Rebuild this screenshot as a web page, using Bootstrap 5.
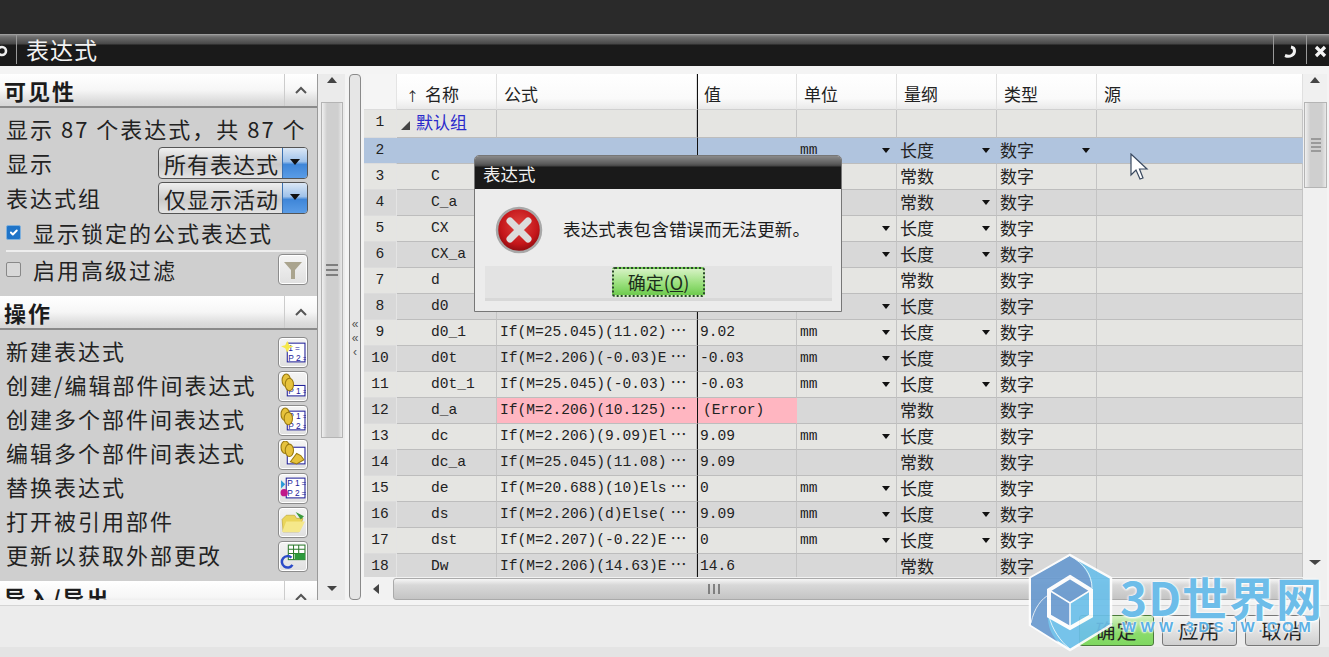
<!DOCTYPE html>
<html lang="zh-CN">
<head>
    <meta charset="UTF-8">
    <meta name="viewport" content="width=device-width, initial-scale=1.0">
    <title>表达式</title>
    <link href="https://cdn.jsdelivr.net/npm/bootstrap@5.3.0/dist/css/bootstrap.min.css" rel="stylesheet">
    <style>
        html, body { height: 657px; overflow: hidden; }
        body {
            background: #f0f0f0;
            color: #1c1c1c;
            font-family: "Liberation Mono", "Noto Sans CJK SC", monospace;
            position: relative;
        }
        .cjk { font-family: "Noto Sans CJK SC", "Liberation Sans", sans-serif; font-weight: 400; }

        /* title area */
        .top-strip { height: 34px; background: #2a2a2a; }
        .title-strip {
            height: 32px;
            color: #f2f2f2;
            background: linear-gradient(#b0b0b0 0, #8a8a8a 1px, #6e6e6e 3px, #474747 10px, #1a1a1a 11px, #1a1a1a 100%);
        }
        .title-strip .title-text { font-size: 23px; letter-spacing: 1px; line-height: 1; padding: 4px 0 0 9px; }
        .title-gear { width: 17px; border-right: 1px solid #999; height: 30px; overflow: hidden; }
        .title-btn { width: 33px; height: 30px; border-left: 1px solid #999; }
        .main-area { height: 539px; background: #f4f4f4; padding-top: 8px; }

        /* left column */
        .side-col { width: 317px; height: 526px; overflow: hidden; flex: none; }
        .side-head {
            height: 34px;
            background: linear-gradient(#fff 0, #f6f6f6 50%, #dcdcdc 85%, #d6d6d6 100%);
            border-bottom: 2px solid #8a8a8a;
            font-size: 22px;
            font-weight: 700;
            letter-spacing: 2px;
            padding-left: 4px;
        }
        .side-head .head-fold { width: 33px; height: 100%; border-left: 1px solid #ccc; }
        .side-body { background: #cfcfcf; font-size: 22px; letter-spacing: 2px; padding: 0 6px; color: #222; }
        .vis-body { height: 188px; padding-top: 4px; }
        .ops-body { height: 251px; padding-top: 5px; }
        .side-line { height: 35px; }
        .side-line.with-icon { height: 34px; }
        .side-label { margin-bottom: 3px; }
        .sel-box {
            width: 150px; height: 32px; margin-left: auto; margin-right: 3px;
            border: 1px solid #555; border-radius: 4px;
            background: linear-gradient(#efefef, #c9c9c9 55%, #e4e4e4);
            overflow: hidden; letter-spacing: 1px;
        }
        .sel-box span { flex: 1; padding-left: 5px; white-space: nowrap; overflow: hidden; font-size: 22px; line-height: 30px; }
        .sel-drop {
            width: 25px; height: 100%; flex: none;
            background: linear-gradient(#dbe7f5 0, #9fc2ea 45%, #3f86d8 55%, #5a9ce6 100%);
            border-left: 1px solid #3a70b0;
        }
        .form-check-input.side-check {
            width: 15px; height: 15px; margin: 0 12px 0 0; flex: none;
            border: 1px solid #888; border-radius: 2px; background-color: #d8d8d8;
        }
        .form-check-input.side-check:checked { background-color: #1f74c8; border-color: #7fb0dc; }
        .side-sep { height: 2px; background: #eee; margin: 0 5px 0 0; }
        .tool-btn {
            width: 30px; height: 31px; margin-left: auto; margin-right: 3px; padding: 1px;
            border: 1px solid #8c8c8c; border-radius: 4px;
            background: linear-gradient(#f4f4f4, #e0e0e0);
            box-shadow: inset 0 0 0 1px #fff;
            flex: none;
        }

        /* scrollbars */
        .vert-bar { width: 28px; flex: none; border-left: 1px solid #9a9a9a; height: 526px; position: relative; background: #ebebeb; }
        .vert-bar .bar-thumb { position: absolute; left: 3px; right: 2px; background: linear-gradient(90deg, #f0f0f0, #cfcfcf 25%, #cfcfcf 80%, #e8e8e8); border: 1px solid #b4b4b4; }
        .splitter { width: 12px; height: 526px; flex: none; margin: 0 3px 0 4px; border: 1px solid #8a8a8a; border-radius: 4px; background: #e6e6e6; color: #555; font-size: 12px; line-height: 14px; text-align: center; padding-top: 242px; font-family: "Liberation Sans", sans-serif; }
        .grid-pane { width: 939px; flex: none; }
        .grid-wrap { height: 503px; overflow: hidden; }
        .h-bar { height: 23px; background: #f2f2f2; position: relative; }
        .h-bar .h-thumb { position: absolute; left: 29px; right: 0; top: 1px; bottom: 0; background: linear-gradient(#f6f6f6 0, #d8d8d8 30%, #c4c4c4 100%); border: 1px solid #aaa; border-radius: 3px 0 0 3px; }

        /* expression sheet */
        .expr-sheet { table-layout: fixed; border-collapse: separate; border-spacing: 0; width: 939px; }
        .expr-sheet th {
            height: 36px; font-size: 17px; font-weight: 400; padding: 5px 0 0 7px;
            background: linear-gradient(#fff 0, #fafafa 70%, #e9e9e9 100%);
            border-right: 1px solid #e0e0e0; border-bottom: 1px solid #d0d0d0; color: #222;
        }
        .expr-sheet td {
            height: 26px; padding: 0 0 0 3px; font-size: 14.6px; line-height: 25px; vertical-align: top;
            font-family: "Liberation Mono", "Noto Sans CJK SC", monospace;
            white-space: nowrap; position: relative;
            border-right: 1px solid #c4c4c4; border-bottom: 1px solid #bdbdbd; color: #222;
        }
        .expr-sheet tr:nth-child(odd) td { background: #e5e5e2; }
        .expr-sheet tr:nth-child(even) td { background: #d8d8d8; }
        .expr-sheet tr.picked td { background: #b0c4de; border-right-color: #b0c4de; }
        .expr-sheet td.row-num, .expr-sheet th.row-num {
            background: #f5f5f5; text-align: center; padding: 0; border-right: 1px solid #e4e4e4; border-bottom: 1px solid #dcdcdc;
            font-size: 14.6px;
        }
        .expr-sheet .val-col { border-left: 1.5px solid #111; padding-left: 2px; }
        .expr-sheet th.val-col { padding-left: 6px; }
        .expr-sheet td.bad-cell { background: #ffb6c1 !important; border-right-color: #ffb6c1; }
        .expr-sheet td.val-col.bad-cell { padding-left: 5px; }
        .expr-sheet td.name-cell { padding-left: 34px; }
        .expr-sheet td.cjk { font-family: "Noto Sans CJK SC", sans-serif; font-size: 17px; line-height: 23px; }
        .expr-sheet td.group-cell { padding-left: 4px; line-height: 23px; }
        .group-name { color: #2a2acb; font-size: 17px; padding-left: 6px; }
        .dots { font-size: 16px; margin-left: 4px; line-height: 0; }
        .drop-mark { position: absolute; right: 6px; top: 10px; border: 4px solid transparent; border-top: 5px solid #111; border-bottom: 0; }

        /* footer */
        .foot-bar { height: 52px; border-top: 1px solid #d4d4d4; background: linear-gradient(#ececec 0, #ececec 80%, #e4e4e4 80%); padding: 9px 9px 0 0; }
        .btn.foot-btn {
            width: 75px; height: 31px; padding: 0; font-size: 20px; line-height: 29px; letter-spacing: 1px;
            border: 1px solid #777; border-radius: 3px; color: #222;
            background: linear-gradient(#f6f6f6, #cfcfcf);
        }
        .btn.foot-btn.go-btn { background: linear-gradient(#d4f0c0, #8adb6c 60%, #7fd860); border-color: #4a7a3a; }

        /* message box */
        .msg-box {
            position: absolute; left: 474px; top: 155px; width: 368px; height: 157px;
            background: #ececec; border: 1px solid #777; border-radius: 5px 5px 0 0; overflow: hidden;
        }
        .msg-head {
            height: 33px; color: #f0f0f0; font-size: 17.5px; line-height: 1; padding: 9px 0 0 8px;
            background: linear-gradient(#8a8a8a 0, #5a5a5a 8px, #444 10px, #1a1a1a 11px, #1a1a1a 100%);
            border: 0; border-radius: 0 !important;
        }
        .msg-main { height: 77px; padding: 0 0 0 20px; }
        .msg-text { font-size: 17.5px; margin-left: 20px; white-space: nowrap; letter-spacing: .15px; padding-top: 3px; }
        .msg-foot { margin: 0 9px 0 10px; height: 35px; background: #e3e3e3; border-bottom: 3px solid #d8d8d8; }
        .btn.msg-ok {
            width: 93px; height: 30px; padding: 0; font-size: 18px; line-height: 26px; color: #1c2c1c;
            border: 2px dotted #2c4a2c; border-radius: 3px;
            background: linear-gradient(#d6f2c4, #9be07e 55%, #6ecb4e);
        }

        .mouse-arrow { position: absolute; left: 1130px; top: 153px; }

        /* watermark */
        .mark-logo { position: absolute; left: 1028px; top: 553px; opacity: .92; }
        .mark-name {
            position: absolute; left: 1120px; top: 566px; font-size: 46px; font-weight: 700; line-height: 60px;
            color: #6dbde9; white-space: nowrap; letter-spacing: 1px;
            text-shadow: 0 0 2px #fff, 0 0 3px #fff, 1px 1px 2px #fff;
        }
        .mark-url {
            position: absolute; left: 1122px; top: 618px; font-size: 15px; line-height: 18px;
            font-family: "Liberation Sans", sans-serif; font-weight: 700; color: #5cb0e4; letter-spacing: 4.4px; white-space: nowrap;
            text-shadow: 0 0 2px #fff, 0 0 2px #fff, 0 0 3px #fff;
        }
    </style>
</head>
<body>
    <div class="top-strip"></div>

    <!-- Title bar -->
    <div class="title-strip d-flex cjk">
        <div class="title-gear d-flex align-items-center">
            <svg width="14" height="14" viewBox="0 0 14 14" style="margin-left:-5px;margin-top:3px;flex:none"><circle cx="7" cy="7" r="4" fill="none" stroke="#eee" stroke-width="2.6"/></svg>
        </div>
        <div class="title-text">表达式</div>
        <div class="title-btn d-flex align-items-center justify-content-center ms-auto">
            <svg width="14" height="14" viewBox="0 0 14 14" style="margin-top:4px"><path d="M2 11.5 C7 13.5 11.5 11 11.5 7 C11.5 5 10.5 3.5 8 3" fill="none" stroke="#f2f2f2" stroke-width="3"/></svg>
        </div>
        <div class="title-btn d-flex align-items-center justify-content-end" style="width:23px">
            <svg width="13" height="13" viewBox="0 0 13 13" style="margin-top:4px;margin-right:2px"><path d="M2 2 L11 11 M11 2 L2 11" stroke="#f4f4f4" stroke-width="3.2"/></svg>
        </div>
    </div>

    <div class="main-area d-flex cjk">
        <!-- Left panel -->
        <div class="side-col">
            <div class="side-head d-flex align-items-center">可见性
                <div class="head-fold ms-auto d-flex align-items-center justify-content-center"><svg width="12" height="8" viewBox="0 0 12 8"><path d="M1 7 L6 2 L11 7" fill="none" stroke="#555" stroke-width="2"/></svg></div>
            </div>
            <div class="side-body vis-body">
                <div class="side-line d-flex align-items-center" style="height:33px;white-space:nowrap">显示 87 个表达式，共 87 个</div>
                <div class="side-line d-flex align-items-center">显示
                    <div class="sel-box d-flex"><span>所有表达式</span><div class="sel-drop d-flex align-items-center justify-content-center"><svg width="12" height="7" viewBox="0 0 12 7"><path d="M1 0 H11 L6 6 Z" fill="#111"/></svg></div></div>
                </div>
                <div class="side-line d-flex align-items-center">表达式组
                    <div class="sel-box d-flex"><span>仅显示活动</span><div class="sel-drop d-flex align-items-center justify-content-center"><svg width="12" height="7" viewBox="0 0 12 7"><path d="M1 0 H11 L6 6 Z" fill="#111"/></svg></div></div>
                </div>
                <div class="side-line d-flex align-items-center"><input class="form-check-input side-check" type="checkbox" checked>显示锁定的公式表达式</div>
                <div class="side-sep"></div>
                <div class="side-line d-flex align-items-center"><input class="form-check-input side-check" type="checkbox">启用高级过滤
                    <div class="tool-btn d-flex align-items-center justify-content-center"><svg width="22" height="22" viewBox="0 0 22 22"><path d="M2 3 H20 L13 11 V20 H9 V11 Z" fill="#aaa48e"/></svg></div>
                </div>
            </div>

            <div class="side-head d-flex align-items-center">操作
                <div class="head-fold ms-auto d-flex align-items-center justify-content-center"><svg width="12" height="8" viewBox="0 0 12 8"><path d="M1 7 L6 2 L11 7" fill="none" stroke="#555" stroke-width="2"/></svg></div>
            </div>
            <div class="side-body ops-body" id="opsList"></div>

            <div class="side-head d-flex align-items-center">导入/导出
                <div class="head-fold ms-auto d-flex align-items-center justify-content-center"><svg width="12" height="8" viewBox="0 0 12 8"><path d="M1 7 L6 2 L11 7" fill="none" stroke="#555" stroke-width="2"/></svg></div>
            </div>
        </div>

        <!-- Left scrollbar -->
        <div class="vert-bar">
            <svg class="position-absolute" style="left:8px;top:2px" width="12" height="8" viewBox="0 0 12 8"><path d="M1 7 L6 1 L11 7 Z" fill="#444"/></svg>
            <div class="bar-thumb d-flex align-items-center justify-content-center" style="top:28px;height:336px">
                <svg width="14" height="12" viewBox="0 0 14 12"><path d="M1 1 H13 M1 6 H13 M1 11 H13" stroke="#666" stroke-width="1.5"/></svg>
            </div>
            <svg class="position-absolute" style="left:8px;top:512px" width="12" height="6" viewBox="0 0 12 6"><path d="M1 0 H11 L6 5 Z" fill="#444"/></svg>
        </div>

        <!-- Splitter -->
        <div class="splitter">«<br>«<br>‹</div>

        <!-- Expression grid -->
        <div class="grid-pane">
            <div class="grid-wrap">
                <table class="expr-sheet">
                    <colgroup>
                        <col style="width:33px"><col style="width:100px"><col style="width:200px"><col style="width:100px"><col style="width:100px"><col style="width:100px"><col style="width:100px"><col style="width:206px">
                    </colgroup>
                    <thead>
                        <tr>
                            <th class="row-num"></th>
                            <th style="padding-left:9px"><span style="font-size:13px;margin-right:6px">↑</span>名称</th>
                            <th>公式</th>
                            <th class="val-col">值</th>
                            <th>单位</th>
                            <th>量纲</th>
                            <th>类型</th>
                            <th>源</th>
                        </tr>
                    </thead>
                    <tbody id="exprRows"></tbody>
                </table>
            </div>
            <div class="h-bar">
                <svg class="position-absolute" style="left:9px;top:7px" width="7" height="10" viewBox="0 0 7 10"><path d="M6 0 V10 L0 5 Z" fill="#444"/></svg>
                <div class="h-thumb d-flex align-items-center justify-content-center">
                    <svg width="14" height="12" viewBox="0 0 14 12" style="margin-right:268px"><path d="M2 1 V11 M7 1 V11 M12 1 V11" stroke="#666" stroke-width="1.5"/></svg>
                </div>
            </div>
        </div>

        <!-- Right scrollbar -->
        <div class="vert-bar" style="width:24px;border-left:0;height:526px;background:#f0f0f0">
            <svg class="position-absolute" style="left:6px;top:2px" width="12" height="8" viewBox="0 0 12 8"><path d="M1 7 L6 1 L11 7 Z" fill="#444"/></svg>
            <div class="bar-thumb d-flex align-items-center justify-content-center" style="top:28px;height:86px;left:1px;right:0">
                <svg width="12" height="14" viewBox="0 0 12 14"><path d="M1 1 H11 M1 5 H11 M1 9 H11 M1 13 H11" stroke="#666" stroke-width="1.2"/></svg>
            </div>
            <svg class="position-absolute" style="left:5px;top:486px" width="14" height="6" viewBox="0 0 14 6"><path d="M1 0 H13 L7 5 Z" fill="#444"/></svg>
        </div>
    </div>

    <!-- Footer buttons -->
    <div class="foot-bar d-flex justify-content-end gap-2 cjk">
        <button class="btn foot-btn go-btn cjk" type="button">确定</button>
        <button class="btn foot-btn cjk" type="button">应用</button>
        <button class="btn foot-btn cjk" type="button">取消</button>
    </div>

    <!-- Message box over the sheet -->
    <div class="card msg-box cjk">
        <div class="card-header msg-head">表达式</div>
        <div class="msg-main d-flex align-items-center">
            <svg width="48" height="48" viewBox="0 0 48 48" style="margin-top:4px;flex:none">
                <defs>
                    <radialGradient id="errRed" cx="50%" cy="40%" r="60%">
                        <stop offset="0" stop-color="#e0443f"/><stop offset=".7" stop-color="#c4161a"/><stop offset="1" stop-color="#8a0c10"/>
                    </radialGradient>
                </defs>
                <circle cx="24" cy="24" r="22" fill="url(#errRed)" stroke="#a8a8a8" stroke-width="2.5"/>
                <path d="M15 15 L33 33 M33 15 L15 33" stroke="#dcdcdc" stroke-width="7" stroke-linecap="round"/>
            </svg>
            <div class="msg-text">表达式表包含错误而无法更新。</div>
        </div>
        <div class="msg-foot d-flex align-items-center justify-content-center">
            <button class="btn msg-ok cjk" type="button">确定(<u>O</u>)</button>
        </div>
    </div>

    <!-- Mouse pointer -->
    <svg class="mouse-arrow" width="20" height="28" viewBox="0 0 20 28"><path d="M1 1 V22 L6 17 L10 26 L13 25 L9.5 16 L17 16 Z" fill="#fff" stroke="#3a4a60" stroke-width="1.2"/></svg>

    <!-- Watermark -->
    <svg class="mark-logo" width="86" height="100" viewBox="0 0 86 100">
        <polygon points="42,2 83,25 83,72 42,97 2,72 2,25" fill="#6cc0ea" stroke="#fff" stroke-width="2.5"/>
        <path d="M42 3 L3 25 V72 L30 89 C22 80 20 72 20 64 V36 L42 23 L64 35 C62 20 54 10 42 3 Z" fill="#6a9bd0"/>
        <path d="M3 70 C6 55 14 45 21 42 M42 3 C56 10 64 22 64 35 M21 63 C24 76 32 88 42 96" fill="none" stroke="#fff" stroke-width="1" opacity=".8"/>
        <path d="M42 24 L63 37 V63 L42 75 L21 63 V37 Z" fill="#6a9bd0"/>
        <path d="M42 50 L63 37 V63 L42 75 Z" fill="#6cc0ea"/>
        <path d="M42 50 L21 37 M42 50 L63 37 M42 50 V75" stroke="#fff" stroke-width="1.5"/>
        <path d="M42 24 L63 37 V63 L42 75 L21 63 V37 Z" fill="none" stroke="#fff" stroke-width="4"/>
    </svg>
    <div class="mark-name cjk">3D世界网</div>
    <div class="mark-url">WWW.3DSJW.COM</div>

    <script src="https://cdn.jsdelivr.net/npm/bootstrap@5.3.0/dist/js/bootstrap.bundle.min.js"></script>
    <script>
        // Small P1=/P2= tile used by most of the tool icons
        const tile = (x, y, w, h, lines) => `<rect x="${x}" y="${y}" width="${w}" height="${h}" fill="#fff" stroke="#22229a"/>` +
            lines.map((t, i) => `<text x="${x + 1}" y="${y + 8 + i * 9}" font-size="8" font-family="Liberation Sans" fill="#22229a">${t}</text>`).join('');
        const coin = (x, y) => `<ellipse cx="${x}" cy="${y}" rx="4" ry="6" fill="#e6c23c" stroke="#9a7a10"/>`;

        const ops = [
            ['新建表达式', tile(7, 4, 17, 18, ['1=', 'P2=']) + '<path d="M7 2 L9 6 L13 7 L9 9 L7 13 L5 9 L1 7 L5 6 Z" fill="#f6e84a"/>'],
            ['创建/编辑部件间表达式', tile(7, 12, 17, 10, ['P1=']) + coin(6, 7) + coin(9, 11)],
            ['创建多个部件间表达式', tile(7, 4, 17, 18, ['P1=', 'P2=']) + coin(5, 7) + coin(8, 11)],
            ['编辑多个部件间表达式', tile(7, 6, 17, 16, ['', '']) + coin(5, 6) + coin(9, 9) + '<path d="M10 20 L16 12 L20 14 L23 18 L16 22 Z" fill="#e6c23c" stroke="#9a7a10"/>'],
            ['替换表达式', tile(6, 3, 18, 19, ['P1=', 'P2=']) + '<path d="M1 5 L5 9 L1 13 Z" fill="#2a9ad8"/><circle cx="4" cy="17" r="3.5" fill="#c0188a"/>'],
            ['打开被引用部件', '<path d="M2 10 L6 6 H14 L16 9 H22 L18 22 H3 Z" fill="#ead55a" stroke="#b8a030" stroke-width=".6"/><path d="M2 22 L6 12 H24 L19 22 Z" fill="#f5e88a"/><path d="M15 3 L23 7 L20 10 Z" fill="#3c9a3c"/>'],
            ['更新以获取外部更改', '<rect x="8" y="2" width="16" height="14" fill="#fff" stroke="#2c7a2c"/><path d="M8 6 H24 M8 10 H24 M13 2 V16 M18 2 V16" stroke="#2c7a2c"/><path d="M14 10 H24 V16 H14 Z" fill="#2c9a3c"/><path d="M11 14 A5.5 5.5 0 1 0 12 21" fill="none" stroke="#2a4ac8" stroke-width="2.4"/>']
        ];
        document.getElementById('opsList').innerHTML = ops.map(op => `
            <div class="side-line with-icon d-flex align-items-center"><span class="side-label">${op[0]}</span>
                <div class="tool-btn d-flex align-items-center justify-content-center"><svg width="26" height="26" viewBox="0 0 25 25">${op[1]}</svg></div>
            </div>`).join('');

        // name, formula, value, unit, unit arrow, dimension, dimension arrow
        const rows = [
            ['', '', '', 'mm', 1, '长度', 1, 1],
            ['C', '', '', '', 0, '常数', 0],
            ['C_a', '', '', '', 0, '常数', 1],
            ['CX', '', '', '', 1, '长度', 1],
            ['CX_a', '', '', '', 1, '长度', 1],
            ['d', '', '', '', 0, '常数', 0],
            ['d0', '', '', '', 1, '长度', 0],
            ['d0_1', 'If(M=25.045)(11.02)', '9.02', 'mm', 1, '长度', 1],
            ['d0t', 'If(M=2.206)(-0.03)E', '-0.03', 'mm', 1, '长度', 0],
            ['d0t_1', 'If(M=25.045)(-0.03)', '-0.03', 'mm', 1, '长度', 1],
            ['d_a', 'If(M=2.206)(10.125)', '(Error)', '', 0, '常数', 0],
            ['dc', 'If(M=2.206)(9.09)El', '9.09', 'mm', 1, '长度', 0],
            ['dc_a', 'If(M=25.045)(11.08)', '9.09', '', 0, '常数', 0],
            ['de', 'If(M=20.688)(10)Els', '0', 'mm', 1, '长度', 0],
            ['ds', 'If(M=2.206)(d)Else(', '9.09', 'mm', 1, '长度', 1],
            ['dst', 'If(M=2.207)(-0.22)E', '0', 'mm', 1, '长度', 1],
            ['Dw', 'If(M=2.206)(14.63)E', '14.6', '', 0, '常数', 0]
        ];
        const mark = on => on ? '<i class="drop-mark"></i>' : '';

        let html = `<tr>
            <td class="row-num">1</td>
            <td class="group-cell"><svg width="9" height="9" viewBox="0 0 9 9"><path d="M9 0 V9 H0 Z" fill="#444"/></svg><span class="group-name cjk">默认组</span></td>
            <td></td><td class="val-col"></td><td></td><td></td><td></td><td></td></tr>`;
        rows.forEach((r, i) => {
            const isBad = r[2] === '(Error)';
            html += `<tr class="${i === 0 ? 'picked' : ''}">
                <td class="row-num">${i + 2}</td>
                <td class="name-cell">${r[0]}</td>
                <td class="${isBad ? 'bad-cell' : ''}">${r[1]}${r[1] ? '<span class="dots cjk">⋯</span>' : ''}</td>
                <td class="val-col ${isBad ? 'bad-cell' : ''}">${r[2]}</td>
                <td>${r[3]}${mark(r[4])}</td>
                <td class="cjk">${r[5]}${mark(r[6])}</td>
                <td class="cjk">数字${mark(r[7])}</td>
                <td></td></tr>`;
        });
        document.getElementById('exprRows').innerHTML = html;
    </script>
</body>
</html>
